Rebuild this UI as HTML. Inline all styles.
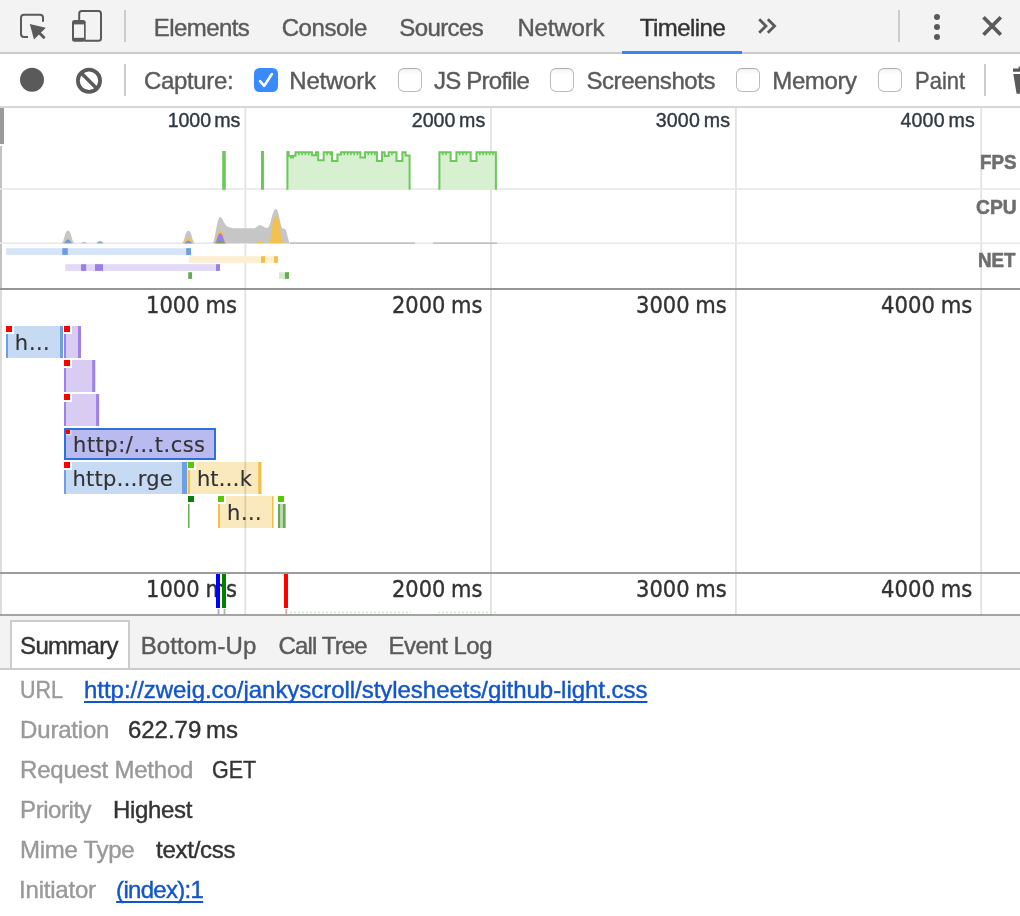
<!DOCTYPE html>
<html lang="en">
<head>
<meta charset="utf-8">
<title>DevTools - Timeline</title>
<style>
html,body{margin:0;padding:0;}
body{width:1020px;height:916px;position:relative;overflow:hidden;background:#fff;font-family:"Liberation Sans",sans-serif;}
.layer{position:absolute;left:0;top:0;width:1020px;height:916px;will-change:transform;}
.blk{position:absolute;}
.t{position:absolute;line-height:1;white-space:pre;text-decoration:none;-webkit-text-stroke:0.4px currentColor;}
a.link{text-decoration:underline;text-decoration-thickness:2px;text-underline-offset:3.2px;text-decoration-skip-ink:none;}
svg{position:absolute;left:0;top:0;overflow:visible;}
.cb{position:absolute;width:22px;height:22px;top:68px;border:1px solid #bcbcbc;border-top-color:#adadad;border-radius:6px;background:linear-gradient(#f1f1f1,#fff 22%,#fff);}
.cb.on{width:24px;height:24px;top:68px;border:0;border-radius:5.5px;background:#398bfc;}
</style>
</head>
<body>

<!-- main tab bar -->
<header class="layer" id="tabbar">
  <div class="blk" style="left:0;top:0;width:1020px;height:52px;background:#f3f3f3;border-bottom:2px solid #cbcbcb"></div>
  <div class="blk" style="left:124px;top:10px;width:2px;height:32px;background:#ccc"></div>
  <div class="blk" style="left:898px;top:10px;width:2px;height:32px;background:#ccc"></div>
  <div class="blk" style="left:622px;top:51px;width:120px;height:3px;background:#3b85f3"></div>
  <svg width="1020" height="54" viewBox="0 0 1020 54">
    <!-- inspect -->
    <path d="M28 37H24a3 3 0 0 1-3-3V17.8a3 3 0 0 1 3-3H40a3 3 0 0 1 3 3V21.8" fill="none" stroke="#5a5a5a" stroke-width="2"/>
    <path d="M29.8 23.9L45.8 27.8L34 39.5Z" fill="#5a5a5a"/>
    <path d="M38.5 32L44.6 38.2" stroke="#5a5a5a" stroke-width="2.8" fill="none"/>
    <!-- device -->
    <path d="M79.2 20V13.6a2.5 2.5 0 0 1 2.5-2.5H98.5a2.5 2.5 0 0 1 2.5 2.5V38.2a2.5 2.5 0 0 1-2.5 2.5H85" fill="none" stroke="#5a5a5a" stroke-width="2"/>
    <rect x="72" y="19.9" width="13.7" height="21.8" rx="2.5" fill="#5a5a5a"/>
    <rect x="74" y="24.4" width="10" height="13.4" fill="#f3f3f3"/>
    <!-- more tabs -->
    <path d="M759.2 19.2L766 26L759.2 32.8M767.8 19.2L774.6 26L767.8 32.8" fill="none" stroke="#5a5a5a" stroke-width="2.8"/>
    <!-- menu dots -->
    <circle cx="937" cy="17.1" r="3" fill="#5a5a5a"/><circle cx="937" cy="27" r="3" fill="#5a5a5a"/><circle cx="937" cy="37" r="3" fill="#5a5a5a"/>
    <!-- close -->
    <path d="M983.5 17.3L1000.8 34.8M1000.8 17.3L983.5 34.8" stroke="#5a5a5a" stroke-width="3.7" fill="none"/>
  </svg>
<span class="t tab" style='left:153.80px;top:15.68px;font-size:24px;letter-spacing:-0.578px;color:#5a5a5a;'>Elements</span>
<span class="t tab" style='left:281.70px;top:15.68px;font-size:24px;letter-spacing:-0.418px;color:#5a5a5a;'>Console</span>
<span class="t tab" style='left:399.30px;top:15.68px;font-size:24px;letter-spacing:-0.607px;color:#5a5a5a;'>Sources</span>
<span class="t tab" style='left:517.40px;top:15.68px;font-size:24px;letter-spacing:-0.137px;color:#5a5a5a;'>Network</span>
<span class="t tab sel" style='left:639.70px;top:15.68px;font-size:24px;letter-spacing:-0.536px;color:#333;'>Timeline</span>
</header>

<!-- timeline toolbar -->
<section class="layer" id="toolbar">
  <div class="blk" style="left:0;top:54px;width:1020px;height:52px;background:#fff;border-bottom:2px solid #d6d6d6"></div>
  <div class="blk" style="left:124px;top:64px;width:2px;height:32px;background:#ccc"></div>
  <div class="blk" style="left:984px;top:64px;width:2px;height:32px;background:#ccc"></div>
  <svg width="1020" height="108" viewBox="0 0 1020 108">
    <circle cx="32" cy="79.8" r="12" fill="#5a5a5a"/>
    <circle cx="89" cy="80.8" r="11.1" fill="none" stroke="#5a5a5a" stroke-width="3.8"/>
    <path d="M81 72.8L97 88.8" stroke="#5a5a5a" stroke-width="3.6"/>
    <!-- trash -->
    <path d="M1018.6 68.4V66.4H1024V68.4ZM1013 68.4H1030V71.7H1013ZM1013.3 73.9H1030V93.7H1016.6Z" fill="#5a5a5a"/>
  </svg>
  <div class="cb on" style="left:254px"></div>
  <svg width="1020" height="108" viewBox="0 0 1020 108"><path d="M260 81.2L264.2 85.9L271.9 74" fill="none" stroke="#fff" stroke-width="2.6" stroke-linecap="round" stroke-linejoin="round"/></svg>
  <div class="cb" style="left:398px"></div>
  <div class="cb" style="left:550px"></div>
  <div class="cb" style="left:736px"></div>
  <div class="cb" style="left:878px"></div>
<span class="t" style='left:143.90px;top:69.28px;font-size:24px;letter-spacing:-0.326px;color:#5a5a5a;'>Capture:</span>
<span class="t" style='left:289.30px;top:69.28px;font-size:24px;letter-spacing:-0.220px;color:#5a5a5a;'>Network</span>
<span class="t" style='left:434.00px;top:69.28px;font-size:24px;letter-spacing:-0.773px;color:#5a5a5a;'>JS Profile</span>
<span class="t" style='left:586.50px;top:69.28px;font-size:24px;letter-spacing:-0.451px;color:#5a5a5a;'>Screenshots</span>
<span class="t" style='left:772.30px;top:69.28px;font-size:24px;letter-spacing:-0.394px;color:#5a5a5a;'>Memory</span>
<span class="t" style='left:914.58px;top:69.28px;font-size:24px;letter-spacing:0.000px;color:#5a5a5a;transform:scaleX(0.9161);transform-origin:0 0;'>Paint</span>
</section>

<!-- overview -->
<section class="layer" id="overview">
  <div class="blk" style="left:0;top:108px;width:4px;height:36px;background:#9a9a9a"></div>
  <div class="blk" style="left:0;top:146px;width:2px;height:142px;background:#c2c2c2"></div>
  <svg width="1020" height="290" viewBox="0 0 1020 290">
    <g fill="#e3e3e3">
      <rect x="244.5" y="108" width="1.8" height="180"/><rect x="490" y="108" width="1.8" height="180"/><rect x="735" y="108" width="1.8" height="180"/><rect x="980.3" y="108" width="1.8" height="180"/>
      <rect x="0" y="188.2" width="1020" height="1.6" fill="#e8e8e8"/><rect x="0" y="242.4" width="1020" height="1.6" fill="#e8e8e8"/>
    </g>
    <!-- FPS -->
    <g id="fps">
      <rect x="222.2" y="151" width="3.6" height="38.8" fill="#6cc85a"/>
      <rect x="261" y="151" width="3.1" height="38.8" fill="#6cc85a"/>
      <path d="M287.4 189.8 L287.4 152.0 L288.6 152.0 L288.6 156.0 L291.0 156.0 L291.0 157.5 L293.0 157.5 L293.0 155.8 L295.5 155.8 L295.5 152.2 L312.0 152.2 L312.0 155.2 L316.0 155.2 L316.0 152.2 L318.2 152.2 L318.2 160.2 L323.7 160.2 L323.7 152.2 L332.0 152.2 L332.0 161.0 L337.4 161.0 L337.4 154.5 L341.0 154.5 L341.0 152.2 L360.4 152.2 L360.4 157.6 L365.0 157.6 L365.0 152.2 L376.9 152.2 L376.9 161.0 L382.0 161.0 L382.0 152.2 L384.7 152.2 L384.7 156.0 L388.6 156.0 L388.6 152.2 L396.5 152.2 L396.5 161.0 L402.4 161.0 L402.4 152.2 L405.6 152.2 L405.6 155.6 L409.6 155.6 L409.6 189.8Z" fill="#d7f0d0" stroke="none"/><path d="M287.4 189.8 L287.4 152.0 L288.6 152.0 L288.6 156.0 L291.0 156.0 L291.0 157.5 L293.0 157.5 L293.0 155.8 L295.5 155.8 L295.5 152.2 L312.0 152.2 L312.0 155.2 L316.0 155.2 L316.0 152.2 L318.2 152.2 L318.2 160.2 L323.7 160.2 L323.7 152.2 L332.0 152.2 L332.0 161.0 L337.4 161.0 L337.4 154.5 L341.0 154.5 L341.0 152.2 L360.4 152.2 L360.4 157.6 L365.0 157.6 L365.0 152.2 L376.9 152.2 L376.9 161.0 L382.0 161.0 L382.0 152.2 L384.7 152.2 L384.7 156.0 L388.6 156.0 L388.6 152.2 L396.5 152.2 L396.5 161.0 L402.4 161.0 L402.4 152.2 L405.6 152.2 L405.6 155.6 L409.6 155.6 L409.6 189.8" fill="none" stroke="#6cc85a" stroke-width="2" stroke-linejoin="miter"/><path d="M298.8 152.2v3M302.1 152.2v3M305.4 152.2v3M308.7 152.2v3M327.0 152.2v3M330.3 152.2v3M344.3 152.2v3M347.6 152.2v3M350.9 152.2v3M354.2 152.2v3M357.5 152.2v3M368.3 152.2v3M371.6 152.2v3M374.9 152.2v3M391.9 152.2v3" stroke="#6cc85a" stroke-width="1.6" fill="none"/><path d="M439.4 189.8 L439.4 152.2 L450.6 152.2 L450.6 161.0 L456.4 161.0 L456.4 152.2 L470.7 152.2 L470.7 161.0 L476.5 161.0 L476.5 152.2 L495.9 152.2 L495.9 189.8Z" fill="#d7f0d0" stroke="none"/><path d="M439.4 189.8 L439.4 152.2 L450.6 152.2 L450.6 161.0 L456.4 161.0 L456.4 152.2 L470.7 152.2 L470.7 161.0 L476.5 161.0 L476.5 152.2 L495.9 152.2 L495.9 189.8" fill="none" stroke="#6cc85a" stroke-width="2" stroke-linejoin="miter"/><path d="M442.7 152.2v3M446.0 152.2v3M459.7 152.2v3M463.0 152.2v3M466.3 152.2v3M479.8 152.2v3M483.1 152.2v3M486.4 152.2v3M489.7 152.2v3M493.0 152.2v3" stroke="#6cc85a" stroke-width="1.6" fill="none"/>
    </g>
    <!-- CPU -->
    <g id="cpu">
      <path d="M61.2 243.2C64.4 243.2 64.2 230.4 68.0 230.4C71.8 230.4 71.6 243.2 74.8 243.2ZM80.0 243.2C81.9 243.2 81.8 241.7 84.0 241.7C86.2 241.7 86.1 243.2 88.0 243.2ZM95.0 243.2C97.4 243.2 97.2 240.7 100.0 240.7C102.8 240.7 102.6 243.2 105.0 243.2ZM181.6 243.2C184.8 243.2 184.6 230.7 188.4 230.7C192.2 230.7 192.0 243.2 195.2 243.2ZM212.4 243.2C215.2 243.2 216.6 217 220.2 217C223.2 217 224 226.2 228.5 227L233 228.2L254 228.2C257 228 258 225 259.7 225C262 225 264 228 267.3 228C270.6 228 272.2 209 275.9 209C279.2 209 280 227.5 283 228.5L285.3 229.2C287.3 231 288 243.2 290.5 243.2Z" fill="#c6c6c6"/><path d="M290 243.1H415M433 243.1H497" stroke="#b4b4b4" stroke-width="1.2" fill="none"/><path d="M62.8 243.2C65.3 243.2 65.1 238.6 68.0 238.6C70.9 238.6 70.7 243.2 73.2 243.2ZM182.8 243.2C185.5 243.2 185.3 237.6 188.4 237.6C191.5 237.6 191.3 243.2 194.0 243.2ZM213.7 243.2C216.8 243.2 216.6 230.4 220.3 230.4C224.0 230.4 223.8 243.2 226.9 243.2ZM254.7 243.2C257.1 243.2 256.9 241.6 259.7 241.6C262.5 241.6 262.3 243.2 264.7 243.2ZM268.1 243.2C272.3 243.2 271.1 216.6 276.0 216.6C280.9 216.6 279.7 243.2 283.9 243.2Z" fill="#f2c14e"/><path d="M183.8 243.2C186.0 243.2 185.8 240.8 188.4 240.8C191.0 240.8 190.8 243.2 193.0 243.2ZM214.4 243.2C217.2 243.2 217.0 233.2 220.3 233.2C223.6 233.2 223.4 243.2 226.2 243.2Z" fill="#9b7fe6"/><path d="M63.4 243.2C65.6 243.2 65.4 239.6 68.0 239.6C70.6 239.6 70.4 243.2 72.6 243.2ZM184.8 243.2C186.5 243.2 186.4 241.8 188.4 241.8C190.4 241.8 190.3 243.2 192.0 243.2ZM96.5 243.2C98.2 243.2 98.0 242.0 100.0 242.0C102.0 242.0 101.8 243.2 103.5 243.2Z" fill="#6b9de3"/><path d="M216.1 243.2C218.2 243.2 218.0 240.8 220.5 240.8C223.0 240.8 222.8 243.2 224.9 243.2Z" fill="#6aaa55"/>
    </g>
    <!-- NET -->
    <g id="net">
      <rect x="6" y="248.2" width="185" height="6.7" fill="#d5e4f8"/>
      <rect x="62.3" y="248.2" width="5.5" height="6.7" fill="#6b9de3"/>
      <rect x="186.2" y="248.2" width="4.8" height="6.7" fill="#6b9de3"/>
      <rect x="189.1" y="256.2" width="88.8" height="6.6" fill="#fcefd0"/>
      <rect x="261" y="256.2" width="4" height="6.6" fill="#f0c04a"/>
      <rect x="274" y="256.2" width="3.9" height="6.6" fill="#f0c04a"/>
      <rect x="65.3" y="264.2" width="154.7" height="6.7" fill="#e2d8f7"/>
      <rect x="81" y="264.2" width="5.2" height="6.7" fill="#9b7fe6"/>
      <rect x="95" y="264.2" width="8" height="6.7" fill="#9b7fe6"/>
      <rect x="216" y="264.2" width="4" height="6.7" fill="#9b7fe6"/>
      <rect x="188.2" y="272.2" width="3.9" height="6.7" fill="#6aaa55"/>
      <rect x="279" y="272.2" width="6" height="6.7" fill="#d4ecce"/>
      <rect x="285" y="272.2" width="4" height="6.7" fill="#6aaa55"/>
    </g>
  </svg>
<span class="t" style='left:167.80px;top:111.11px;font-size:19.6px;letter-spacing:-0.109px;color:#303942;word-spacing:-2px;'>1000 ms</span>
<span class="t" style='left:411.70px;top:111.11px;font-size:19.6px;letter-spacing:0.058px;color:#303942;word-spacing:-2px;'>2000 ms</span>
<span class="t" style='left:655.70px;top:111.11px;font-size:19.6px;letter-spacing:0.191px;color:#303942;word-spacing:-2px;'>3000 ms</span>
<span class="t" style='left:900.40px;top:111.11px;font-size:19.6px;letter-spacing:0.208px;color:#303942;word-spacing:-2px;'>4000 ms</span>
<span class="t sx" style='left:979.59px;top:152.46px;font-size:20.6px;letter-spacing:0.000px;color:#6e6e6e;font-weight:bold;transform:scaleX(0.9135);transform-origin:0 0;-webkit-text-stroke:0.6px currentColor;'>FPS</span>
<span class="t sx" style='left:975.70px;top:196.56px;font-size:20.6px;letter-spacing:0.000px;color:#6e6e6e;font-weight:bold;transform:scaleX(0.9341);transform-origin:0 0;-webkit-text-stroke:0.6px currentColor;'>CPU</span>
<span class="t sx" style='left:977.69px;top:250.26px;font-size:20.6px;letter-spacing:0.000px;color:#6e6e6e;font-weight:bold;transform:scaleX(0.9087);transform-origin:0 0;-webkit-text-stroke:0.6px currentColor;'>NET</span>
</section>

<!-- flame chart -->
<section class="layer" id="flame">
  <div class="blk" style="left:0;top:288px;width:1020px;height:2px;background:#959595"></div>
  <div class="blk" style="left:0;top:290px;width:2px;height:324px;background:#dcdcdc"></div>
  <svg width="1020" height="616" viewBox="0 0 1020 616">
    <rect x="6" y="326" width="57.0" height="32" fill="#c6daf4"/><rect x="6" y="326" width="2" height="32" fill="#6f9fe3"/><rect x="60.0" y="326" width="3" height="32" fill="#6f9fe3"/><rect x="6" y="326" width="8" height="8" fill="#fff"/><rect x="6" y="326" width="6" height="6" fill="#ff0000"/>
    <rect x="64" y="326" width="17.0" height="32" fill="#d8ccf3"/><rect x="64" y="326" width="2" height="32" fill="#9d82e8"/><rect x="78.0" y="326" width="3" height="32" fill="#9d82e8"/><rect x="64" y="326" width="8" height="8" fill="#fff"/><rect x="64" y="326" width="6" height="6" fill="#ff0000"/>
    <rect x="64" y="360" width="31.2" height="32" fill="#d8ccf3"/><rect x="64" y="360" width="2" height="32" fill="#9d82e8"/><rect x="92.2" y="360" width="3" height="32" fill="#9d82e8"/><rect x="64" y="360" width="8" height="8" fill="#fff"/><rect x="64" y="360" width="6" height="6" fill="#ff0000"/>
    <rect x="64" y="394" width="35.1" height="32" fill="#d8ccf3"/><rect x="64" y="394" width="2" height="32" fill="#9d82e8"/><rect x="96.1" y="394" width="3" height="32" fill="#9d82e8"/><rect x="64" y="394" width="8" height="8" fill="#fff"/><rect x="64" y="394" width="6" height="6" fill="#ff0000"/>
    <rect x="65" y="429" width="150" height="30" fill="#b9baf0" stroke="#2e6fdc" stroke-width="2"/><rect x="66" y="430" width="5.5" height="5.5" fill="#d9d9f7"/><rect x="66" y="430" width="4" height="4" fill="#ff0000"/>
    <rect x="64" y="462" width="123.2" height="32" fill="#c6daf4"/><rect x="64" y="462" width="2" height="32" fill="#6f9fe3"/><rect x="182.0" y="462" width="5.2" height="32" fill="#6f9fe3"/><rect x="64" y="462" width="8" height="8" fill="#fff"/><rect x="64" y="462" width="6" height="6" fill="#ff0000"/>
    <rect x="188" y="462" width="73.4" height="32" fill="#fbe9be"/><rect x="188" y="462" width="2" height="32" fill="#f0c04a"/><rect x="258.2" y="462" width="3.2" height="32" fill="#f0c04a"/><rect x="188" y="462" width="8" height="8" fill="#fff"/><rect x="188" y="462" width="6" height="6" fill="#5ac800"/>
    <rect x="188" y="496" width="6" height="6" fill="#0a800a"/><rect x="188" y="504" width="1.5" height="24" fill="#6aaa55"/>
    <rect x="218" y="496" width="55.5" height="32" fill="#fbe9be"/><rect x="218" y="496" width="2" height="32" fill="#f0c04a"/><rect x="272.0" y="496" width="1.5" height="32" fill="#f0c04a"/><rect x="218" y="496" width="8" height="8" fill="#fff"/><rect x="218" y="496" width="6" height="6" fill="#5ac800"/>
    <rect x="278" y="496" width="6" height="6" fill="#5ac800"/><rect x="278" y="504" width="7.5" height="24" fill="#b9d9ae"/><rect x="278" y="504" width="2" height="24" fill="#6aaa55"/><rect x="283" y="504" width="2.5" height="24" fill="#6aaa55"/>
    <g fill="rgba(0,0,0,0.12)">
      <rect x="244.4" y="290" width="1.8" height="324"/><rect x="490" y="290" width="1.8" height="324"/><rect x="735" y="290" width="1.8" height="324"/><rect x="980.3" y="290" width="1.8" height="324"/>
    </g>
  </svg>
<span class="t" style='left:145.73px;top:294.08px;font-size:22.6px;letter-spacing:0.000px;color:#333;font-family:"DejaVu Sans", sans-serif;transform:scaleX(0.9325);transform-origin:0 0;word-spacing:-1px;'>1000 ms</span>
<span class="t" style='left:391.57px;top:294.08px;font-size:22.6px;letter-spacing:0.000px;color:#333;font-family:"DejaVu Sans", sans-serif;transform:scaleX(0.9280);transform-origin:0 0;word-spacing:-1px;'>2000 ms</span>
<span class="t" style='left:636.27px;top:294.08px;font-size:22.6px;letter-spacing:0.000px;color:#333;font-family:"DejaVu Sans", sans-serif;transform:scaleX(0.9311);transform-origin:0 0;word-spacing:-1px;'>3000 ms</span>
<span class="t" style='left:881.06px;top:294.08px;font-size:22.6px;letter-spacing:0.000px;color:#333;font-family:"DejaVu Sans", sans-serif;transform:scaleX(0.9364);transform-origin:0 0;word-spacing:-1px;'>4000 ms</span>
<span class="t z1" style='left:14.80px;top:332.53px;font-size:21px;letter-spacing:0.690px;color:#333;font-family:"DejaVu Sans", sans-serif;-webkit-text-stroke:0.15px currentColor;'>h…</span>
<span class="t z1" style='left:73.10px;top:434.53px;font-size:21px;letter-spacing:0.486px;color:#333;font-family:"DejaVu Sans", sans-serif;-webkit-text-stroke:0.15px currentColor;'>http:/…t.css</span>
<span class="t z1" style='left:72.60px;top:468.53px;font-size:21px;letter-spacing:0.214px;color:#333;font-family:"DejaVu Sans", sans-serif;-webkit-text-stroke:0.15px currentColor;'>http…rge</span>
<span class="t z1" style='left:196.90px;top:468.53px;font-size:21px;letter-spacing:0.086px;color:#333;font-family:"DejaVu Sans", sans-serif;-webkit-text-stroke:0.15px currentColor;'>ht…k</span>
<span class="t z1" style='left:227.00px;top:502.53px;font-size:21px;letter-spacing:0.490px;color:#333;font-family:"DejaVu Sans", sans-serif;-webkit-text-stroke:0.15px currentColor;'>h…</span>
</section>

<!-- bottom ruler with markers -->
<section class="layer" id="ruler2">
  <div class="blk" style="left:0;top:572px;width:1020px;height:2px;background:#9c9c9c"></div>
<span class="t" style='left:145.73px;top:578.08px;font-size:22.6px;letter-spacing:0.000px;color:#333;font-family:"DejaVu Sans", sans-serif;transform:scaleX(0.9325);transform-origin:0 0;word-spacing:-1px;'>1000 ms</span>
<span class="t" style='left:391.57px;top:578.08px;font-size:22.6px;letter-spacing:0.000px;color:#333;font-family:"DejaVu Sans", sans-serif;transform:scaleX(0.9280);transform-origin:0 0;word-spacing:-1px;'>2000 ms</span>
<span class="t" style='left:636.27px;top:578.08px;font-size:22.6px;letter-spacing:0.000px;color:#333;font-family:"DejaVu Sans", sans-serif;transform:scaleX(0.9311);transform-origin:0 0;word-spacing:-1px;'>3000 ms</span>
<span class="t" style='left:881.06px;top:578.08px;font-size:22.6px;letter-spacing:0.000px;color:#333;font-family:"DejaVu Sans", sans-serif;transform:scaleX(0.9364);transform-origin:0 0;word-spacing:-1px;'>4000 ms</span>
  <svg width="1020" height="616" viewBox="0 0 1020 616">
    <rect x="216" y="574" width="4" height="34" fill="#0000ff"/>
    <rect x="222" y="574" width="4" height="34" fill="#008000"/>
    <rect x="284" y="574" width="4" height="34" fill="#ff0000"/>
    <rect x="217.6" y="609" width="1.8" height="5" fill="#a9a2f5"/>
    <rect x="223.6" y="609" width="1.8" height="5" fill="#8fd08f"/>
    <rect x="285.4" y="609" width="1.8" height="5" fill="#f79a9a"/>
    <path d="M290 612.5H411M438 612.5H497" stroke="#cdeec6" stroke-width="1.4" stroke-dasharray="2 2" fill="none"/>
  </svg>
  <div class="blk" style="left:0;top:614px;width:1020px;height:2px;background:#a3a3a3"></div>
</section>

<!-- details tabs -->
<nav class="layer" id="btabs">
  <div class="blk" style="left:0;top:616px;width:1020px;height:52px;background:#f3f3f3;border-bottom:2px solid #ccc"></div>
  <div class="blk" style="left:10px;top:620px;width:116px;height:46px;background:#fff;border:2px solid #ccc;border-bottom:0"></div>
<span class="t" style='left:20.10px;top:633.98px;font-size:24px;letter-spacing:-0.713px;color:#333;'>Summary</span>
<span class="t" style='left:140.70px;top:633.98px;font-size:24px;letter-spacing:0.118px;color:#5a5a5a;'>Bottom-Up</span>
<span class="t" style='left:278.40px;top:633.98px;font-size:24px;letter-spacing:-0.840px;color:#5a5a5a;'>Call Tree</span>
<span class="t" style='left:388.50px;top:633.98px;font-size:24px;letter-spacing:-0.504px;color:#5a5a5a;'>Event Log</span>
</nav>

<!-- summary -->
<main class="layer" id="summary">
<span class="t" style='left:20.20px;top:677.78px;font-size:24px;letter-spacing:0.000px;color:#999;transform:scaleX(0.8958);transform-origin:0 0;'>URL</span>
<a class="t link" style='left:84.00px;top:677.78px;font-size:24px;letter-spacing:-0.038px;color:#1155cc;'>http://zweig.co/jankyscroll/stylesheets/github-light.css</a>
<span class="t" style='left:20.10px;top:717.78px;font-size:24px;letter-spacing:-0.195px;color:#999;'>Duration</span>
<span class="t" style='left:127.90px;top:717.78px;font-size:24px;letter-spacing:-0.008px;color:#333;word-spacing:-2px;'>622.79 ms</span>
<span class="t" style='left:20.10px;top:757.78px;font-size:24px;letter-spacing:-0.212px;color:#999;'>Request Method</span>
<span class="t" style='left:212.00px;top:757.78px;font-size:24px;letter-spacing:0.000px;color:#333;transform:scaleX(0.8957);transform-origin:0 0;'>GET</span>
<span class="t" style='left:20.10px;top:797.78px;font-size:24px;letter-spacing:-0.453px;color:#999;'>Priority</span>
<span class="t" style='left:112.90px;top:797.78px;font-size:24px;letter-spacing:-0.318px;color:#333;'>Highest</span>
<span class="t" style='left:20.10px;top:837.78px;font-size:24px;letter-spacing:-0.314px;color:#999;'>Mime Type</span>
<span class="t" style='left:156.10px;top:837.78px;font-size:24px;letter-spacing:-0.279px;color:#333;'>text/css</span>
<span class="t" style='left:19.10px;top:877.78px;font-size:24px;letter-spacing:-0.214px;color:#999;'>Initiator</span>
<a class="t link" style='left:116.10px;top:877.78px;font-size:24px;letter-spacing:-0.703px;color:#1155cc;'>(index):1</a>
</main>

</body>
</html>
